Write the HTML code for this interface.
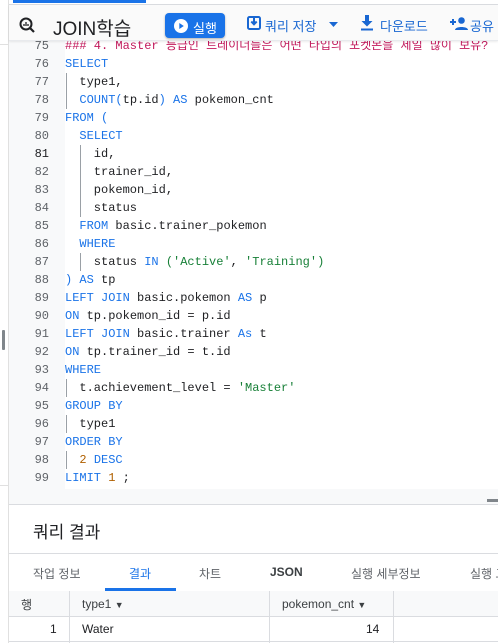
<!DOCTYPE html>
<html><head><meta charset="utf-8"><style>
*{margin:0;padding:0;box-sizing:border-box}
body{width:498px;height:643px;overflow:hidden;background:#fff;font-family:"Liberation Sans","Noto Sans CJK KR",sans-serif;position:relative;color:#202124}
.abs{position:absolute;white-space:nowrap}
#left{left:0;top:0;width:9px;height:643px;background:#fff;border-right:1px solid #e0e0e0}
#tabstrip{left:9px;top:0;width:489px;height:5px;background:#fff;border-bottom:1px solid #dadce0}
#tabline{left:13px;top:0;width:133px;height:3px;background:#1a73e8}
#tool{left:9px;top:5px;width:489px;height:36px;background:#fafafa;border-bottom:1px solid #e8eaed;box-shadow:0 1px 2px rgba(0,0,0,.08);z-index:3}
.gut{left:9px;top:41px;width:56px;height:448px;background:#f8f9fa}
.code{left:65px;top:41px;width:433px;height:448px;background:#fff;overflow:hidden}
.ln{position:absolute;left:9px;width:40px;text-align:right;font:12px/18px "Liberation Mono",monospace;color:#5f6368}
.cl{position:absolute;left:65px;white-space:pre;font:12px/18px "Liberation Mono","Noto Sans CJK KR",monospace;color:#202124}
.k{color:#1a73e8}.s{color:#188038}.n{color:#b06000}.c{color:#c2185b}
.bar{position:absolute;width:1px;background:#9aa0a6}
#strip{left:9px;top:489px;width:489px;height:16px;background:#f8f9fa;border-bottom:1px solid #dadce0}
.th{font-size:12px;color:#3c4043}
</style></head><body>
<div class="abs" id="left"></div>
<div class="abs" style="left:0;top:44px;width:9px;height:1px;background:#e0e0e0"></div>
<div class="abs" style="left:0;top:485px;width:9px;height:1px;background:#e0e0e0"></div>
<div class="abs" style="left:2px;top:330px;width:3px;height:20px;background:#80868b;border-radius:1px"></div>
<div class="abs" id="tabstrip"></div>
<div class="abs" id="tabline"></div>
<div class="abs" id="tool">
 <svg class="abs" style="left:9px;top:11px" width="18" height="18" viewBox="0 0 18 18"><circle cx="8" cy="8" r="5.5" fill="none" stroke="#202124" stroke-width="2"/><path d="M12 12l4 4" stroke="#202124" stroke-width="2.2"/><path d="M6 10V8M8 10V6M10 10V8" stroke="#202124" stroke-width="1.3"/></svg>
 <div class="abs" style="left:44px;top:9px;font-size:19px;color:#202124">JOIN학습</div>
 <div class="abs" style="left:156px;top:8px;width:60px;height:25px;background:#1a73e8;border-radius:4px;box-shadow:0 1px 2px rgba(0,0,0,.3)">
  <svg class="abs" style="left:9px;top:6px" width="14" height="14" viewBox="0 0 14 14"><circle cx="7" cy="7" r="7" fill="#fff"/><path d="M5.3 4v6l4.5-3z" fill="#1a73e8"/></svg>
  <div class="abs" style="left:28px;top:5px;color:#fff;font-size:13px">실행</div>
 </div>
 <svg class="abs" style="left:238px;top:11px" width="14" height="14" viewBox="0 0 14 14"><rect x="1" y="1" width="12" height="12" rx="1.5" fill="none" stroke="#1967d2" stroke-width="2"/><path d="M7 2v6M4.3 5.5L7 8.3 9.7 5.5" fill="none" stroke="#1967d2" stroke-width="2"/></svg>
 <div class="abs" style="left:256px;top:11px;color:#1967d2;font-size:13px">쿼리 저장</div>
 <svg class="abs" style="left:320px;top:17px" width="9" height="5"><path d="M0 0h9L4.5 5z" fill="#1967d2"/></svg>
 <svg class="abs" style="left:351px;top:10px" width="14" height="16" viewBox="0 0 14 16"><path d="M5 0h4v6h3.5L7 11.5 1.5 6H5z M1 13.5h12v2H1z" fill="#1967d2"/></svg>
 <div class="abs" style="left:371px;top:11px;color:#1967d2;font-size:13px">다운로드</div>
 <svg class="abs" style="left:441px;top:12px" width="18" height="13" viewBox="0 0 18 13"><path d="M0 5h6M3 2v6" stroke="#1967d2" stroke-width="2"/><circle cx="11.5" cy="3.5" r="3.3" fill="#1967d2"/><path d="M5 13c0-4 13-4 13 0z" fill="#1967d2"/></svg>
 <div class="abs" style="left:461px;top:11px;color:#1967d2;font-size:13px">공유</div>
</div>
<div class="abs gut"></div>
<div class="abs code"></div>
<div class="ln" style="top:37px">75</div><div class="cl c" style="top:37px">### 4. Master 등급인 트레이너들은 어떤 타입의 포켓몬을 제일 많이 보유?</div>
<div class="ln" style="top:55px">76</div><div class="cl k" style="top:55px">SELECT</div>
<div class="ln" style="top:73px">77</div><div class="cl" style="top:73px">  type1,</div>
<div class="ln" style="top:91px">78</div><div class="cl" style="top:91px">  <span class="k">COUNT(</span>tp.id<span class="k">)</span> <span class="k">AS</span> pokemon_cnt</div>
<div class="ln" style="top:109px">79</div><div class="cl" style="top:109px"><span class="k">FROM (</span></div>
<div class="ln" style="top:127px">80</div><div class="cl" style="top:127px">  <span class="k">SELECT</span></div>
<div class="ln" style="top:145px;color:#202124">81</div><div class="cl" style="top:145px">    id,</div>
<div class="ln" style="top:163px">82</div><div class="cl" style="top:163px">    trainer_id,</div>
<div class="ln" style="top:181px">83</div><div class="cl" style="top:181px">    pokemon_id,</div>
<div class="ln" style="top:199px">84</div><div class="cl" style="top:199px">    status</div>
<div class="ln" style="top:217px">85</div><div class="cl" style="top:217px">  <span class="k">FROM</span> basic.trainer_pokemon</div>
<div class="ln" style="top:235px">86</div><div class="cl" style="top:235px">  <span class="k">WHERE</span></div>
<div class="ln" style="top:253px">87</div><div class="cl" style="top:253px">    status <span class="k">IN</span> <span class="s">(</span><span class="s">'Active'</span>, <span class="s">'Training'</span><span class="s">)</span></div>
<div class="ln" style="top:271px">88</div><div class="cl" style="top:271px"><span class="k">)</span> <span class="k">AS</span> tp</div>
<div class="ln" style="top:289px">89</div><div class="cl" style="top:289px"><span class="k">LEFT JOIN</span> basic.pokemon <span class="k">AS</span> p</div>
<div class="ln" style="top:307px">90</div><div class="cl" style="top:307px"><span class="k">ON</span> tp.pokemon_id = p.id</div>
<div class="ln" style="top:325px">91</div><div class="cl" style="top:325px"><span class="k">LEFT JOIN</span> basic.trainer <span class="k">As</span> t</div>
<div class="ln" style="top:343px">92</div><div class="cl" style="top:343px"><span class="k">ON</span> tp.trainer_id = t.id</div>
<div class="ln" style="top:361px">93</div><div class="cl k" style="top:361px">WHERE</div>
<div class="ln" style="top:379px">94</div><div class="cl" style="top:379px">  t.achievement_level = <span class="s">'Master'</span></div>
<div class="ln" style="top:397px">95</div><div class="cl k" style="top:397px">GROUP BY</div>
<div class="ln" style="top:415px">96</div><div class="cl" style="top:415px">  type1</div>
<div class="ln" style="top:433px">97</div><div class="cl k" style="top:433px">ORDER BY</div>
<div class="ln" style="top:451px">98</div><div class="cl" style="top:451px">  <span class="n">2</span> <span class="k">DESC</span></div>
<div class="ln" style="top:469px">99</div><div class="cl" style="top:469px"><span class="k">LIMIT</span> <span class="n">1</span> ;</div>
<div class="bar" style="left:66px;top:73px;height:36px"></div>
<div class="bar" style="left:80px;top:145px;height:72px"></div>
<div class="bar" style="left:80px;top:253px;height:18px"></div>
<div class="bar" style="left:66px;top:379px;height:18px"></div>
<div class="bar" style="left:66px;top:415px;height:18px"></div>
<div class="bar" style="left:66px;top:451px;height:18px"></div>
<div class="abs" id="strip"></div>
<div class="abs" style="left:487px;top:499px;width:11px;height:3px;background:#80868b"></div>
<div class="abs" style="left:33px;top:518px;font-size:17px;color:#202124">쿼리 결과</div>
<div class="abs" style="left:9px;top:553px;width:489px;height:1px;background:#dadce0"></div>
<div class="abs" style="left:33px;top:565px;font-size:12px;color:#5f6368">작업 정보</div>
<div class="abs" style="left:129px;top:565px;font-size:12px;color:#1a73e8">결과</div>
<div class="abs" style="left:199px;top:565px;font-size:12px;color:#5f6368">차트</div>
<div class="abs" style="left:270px;top:565px;font-size:12px;color:#3c4043;font-weight:bold">JSON</div>
<div class="abs" style="left:351px;top:565px;font-size:12px;color:#5f6368">실행 세부정보</div>
<div class="abs" style="left:470px;top:565px;font-size:12px;color:#5f6368">실행 그</div>
<div class="abs" style="left:105px;top:588px;width:71px;height:3px;background:#1a73e8"></div>
<div class="abs" style="left:9px;top:591px;width:489px;height:1px;background:#dadce0"></div>
<div class="abs" style="left:9px;top:591px;width:489px;height:25px;background:#f8f9fa"></div>
<div class="abs" style="left:9px;top:616px;width:489px;height:1px;background:#dadce0"></div>
<div class="abs" style="left:9px;top:641px;width:489px;height:1px;background:#dadce0"></div>
<div class="abs" style="left:69px;top:591px;width:1px;height:52px;background:#dadce0"></div>
<div class="abs" style="left:269px;top:591px;width:1px;height:52px;background:#dadce0"></div>
<div class="abs" style="left:393px;top:591px;width:1px;height:52px;background:#dadce0"></div>
<div class="abs th" style="left:21px;top:596px">행</div>
<div class="abs th" style="left:82px;top:597px">type1 <span style="font-size:9px">▼</span></div>
<div class="abs th" style="left:282px;top:597px">pokemon_cnt <span style="font-size:9px">▼</span></div>
<div class="abs" style="left:50px;top:622px;font-size:12px">1</div>
<div class="abs" style="left:82px;top:622px;font-size:12px">Water</div>
<div class="abs" style="left:366px;top:622px;font-size:12px">14</div>
</body></html>
